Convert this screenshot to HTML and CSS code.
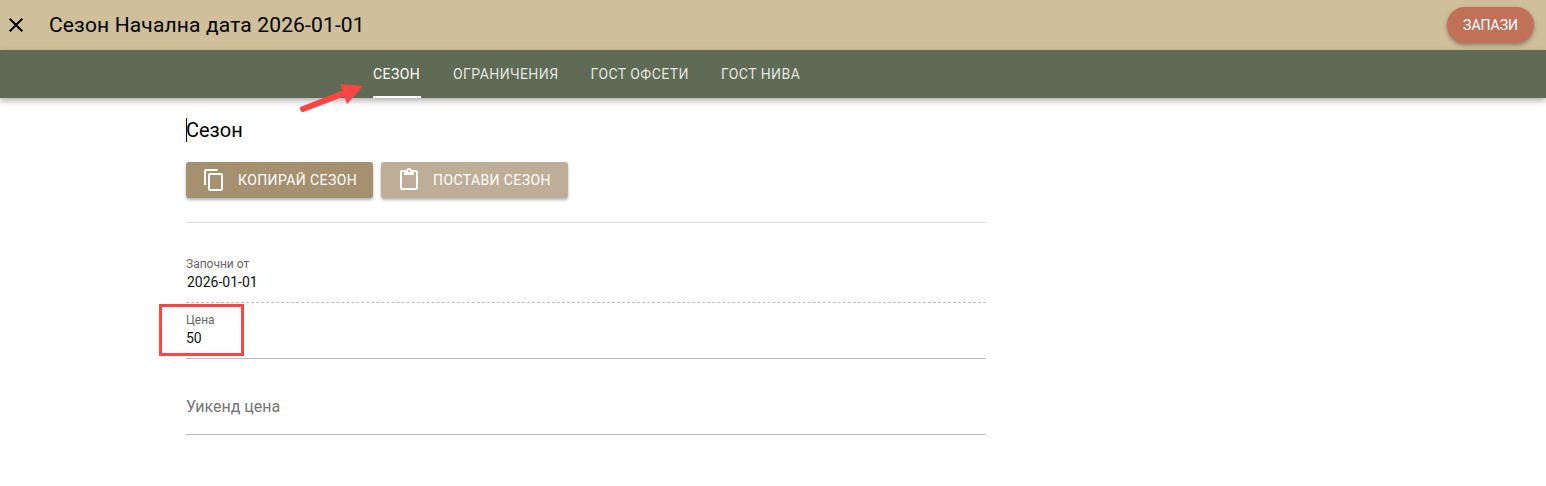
FILE: index.html
```html
<!DOCTYPE html>
<html lang="bg">

<head>
    <meta charset="UTF-8">
    <title>Сезон</title>
    <link rel="stylesheet" href="styles.css">
</head>

<body>
    <header class="topbar">
        <svg class="close-icon" viewBox="0 0 24 24">
            <path d="M19 6.41L17.59 5 12 10.59 6.41 5 5 6.41 10.59 12 5 17.59 6.41 19 12 13.41 17.59 19 19 17.59 13.41 12z" />
        </svg>
        <h1 class="page-title">Сезон Начална дата 2026-01-01</h1>
        <button class="save-btn">Запази</button>
    </header>

    <nav class="tabs">
        <a class="tab active">Сезон</a>
        <a class="tab">Ограничения</a>
        <a class="tab">Гост офсети</a>
        <a class="tab">Гост нива</a>
    </nav>

    <main class="content">
        <h2 class="section-title"><span class="caret"></span>Сезон</h2>

        <div class="actions">
            <button class="action-btn">
                <svg viewBox="0 0 24 24">
                    <path d="M16 1H4c-1.1 0-2 .9-2 2v14h2V3h12V1zm3 4H8c-1.1 0-2 .9-2 2v14c0 1.1.9 2 2 2h11c1.1 0 2-.9 2-2V7c0-1.1-.9-2-2-2zm0 16H8V7h11v14z" />
                </svg>
                Копирай сезон
            </button>
            <button class="action-btn disabled">
                <svg viewBox="0 0 24 24">
                    <path d="M19 2h-4.18C14.4.84 13.3 0 12 0c-1.3 0-2.4.84-2.82 2H5c-1.1 0-2 .9-2 2v16c0 1.1.9 2 2 2h14c1.1 0 2-.9 2-2V4c0-1.1-.9-2-2-2zm-7 0c.55 0 1 .45 1 1s-.45 1-1 1-1-.45-1-1 .45-1 1-1zm7 18H5V4h2v3h10V4h2v16z" />
                </svg>
                Постави сезон
            </button>
        </div>

        <div class="field readonly first">
            <label>Започни от</label>
            <div class="value">2026-01-01</div>
        </div>

        <div class="field price">
            <label>Цена</label>
            <div class="value">50</div>
            <div class="highlight"></div>
        </div>

        <div class="field empty">
            <span class="placeholder">Уикенд цена</span>
        </div>
    </main>

    <!-- annotation arrow -->
    <svg class="arrow" viewBox="0 0 70 34">
        <path d="M5 27L44 12" />
        <polygon points="65,4 42,2 49,22" />
    </svg>
</body>

</html>
```

FILE: styles.css
```css
/* Global Styles */
body {
    font-family: Roboto, "Liberation Sans", sans-serif;
    background-color: #fff;
    margin: 0;
    padding: 0;
    height: 486px;
    overflow: hidden;
    position: relative;
}

button {
    font-family: inherit;
    border: none;
    color: #fff;
    text-transform: uppercase;
}

/* Top bar */
.topbar {
    display: flex;
    align-items: center;
    height: 50px;
    padding: 0 12px 0 4px;
    background-color: #cfbf9a;
}

.close-icon {
    width: 24px;
    height: 24px;
    fill: #000;
}

.page-title {
    flex: 1;
    margin: 0 0 0 21px;
    font-size: 21px;
    font-weight: 400;
    letter-spacing: 0.15px;
    color: #000;
}

.save-btn {
    height: 36px;
    width: 87px;
    padding: 0;
    font-size: 14px;
    background-color: #c07158;
    border-radius: 18px;
    box-shadow: 0 2px 4px rgba(0, 0, 0, 0.35);
}

/* Tabs */
.tabs {
    display: flex;
    justify-content: flex-start;
    gap: 32px;
    height: 48px;
    padding-left: 373px;
    background-color: #606b55;
    box-shadow: 0 3px 6px rgba(0, 0, 0, 0.3);
}

.tab {
    display: flex;
    align-items: center;
    font-size: 14px;
    font-weight: 400;
    letter-spacing: 0.45px;
    text-transform: uppercase;
    color: rgba(255, 255, 255, 0.85);
    box-sizing: border-box;
    border-bottom: 2px solid transparent;
    padding-top: 2px;
}

.tab.active {
    min-width: 48px;
    color: #fff;
    border-bottom-color: #fff;
}

/* Content */
.content {
    width: 800px;
    margin-left: 186px;
}

.section-title {
    margin: 20px 0 0;
    height: 24px;
    font-size: 20px;
    line-height: 24px;
    font-weight: 400;
    color: #000;
    position: relative;
}

.caret {
    position: absolute;
    left: 0;
    top: 0;
    width: 1px;
    height: 24px;
    background-color: #000;
}

.actions {
    display: flex;
    gap: 8px;
    margin-top: 20px;
    padding-bottom: 24px;
    border-bottom: 1px solid #ddd;
}

.action-btn {
    display: flex;
    align-items: center;
    gap: 12px;
    width: 187px;
    height: 36px;
    padding: 0 0 0 16px;
    font-size: 14px;
    letter-spacing: 0.4px;
    background-color: #a59170;
    border-radius: 3px;
    box-shadow: 0 2px 3px rgba(0, 0, 0, 0.3);
}

.action-btn.disabled {
    background-color: #bfae97;
}

.action-btn svg {
    width: 24px;
    height: 24px;
    fill: #fff;
}

/* Form fields */
.field {
    position: relative;
    box-sizing: border-box;
    height: 56px;
    padding-top: 9px;
    border-bottom: 1px solid #bbb;
}

.field.first {
    margin-top: 24px;
    height: 56px;
}

.field.readonly {
    border-bottom: 1px dashed #bbb;
}

.field label {
    display: block;
    font-size: 12px;
    line-height: 16px;
    color: #666;
}

.value {
    margin-top: 0;
    font-size: 14px;
    line-height: 20px;
    color: #111;
}

.readonly .value {
    padding-left: 1px;
}

.highlight {
    position: absolute;
    left: -27px;
    top: 1px;
    width: 79px;
    height: 46px;
    border: 3px solid #ff4444;
}

.field.empty {
    height: 76px;
    padding-top: 38px;
}

.placeholder {
    font-size: 16px;
    line-height: 20px;
    color: #757575;
}

/* Annotation */
.arrow {
    position: absolute;
    left: 298px;
    top: 82px;
    width: 70px;
    height: 34px;
    pointer-events: none;
}

.arrow path {
    fill: none;
    stroke: #ff4444;
    stroke-width: 6;
    stroke-linecap: round;
}

.arrow polygon {
    fill: #ff4444;
}
```
